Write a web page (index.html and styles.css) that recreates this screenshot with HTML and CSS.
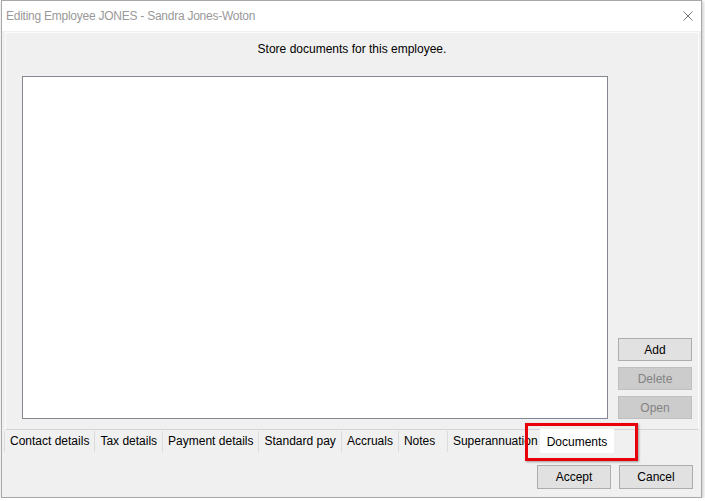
FILE: index.html
```html
<!DOCTYPE html>
<html lang="en">
<head>
    <meta charset="UTF-8">
    <title>Editing Employee JONES - Sandra Jones-Woton</title>
    <link rel="stylesheet" href="styles.css">
</head>
<body>
    <div class="window">
        <div class="titlebar">
            <span class="title">Editing Employee JONES - Sandra Jones-Woton</span>
            <svg class="close" width="10" height="10" viewBox="0 0 10 10">
                <path d="M0.5 0.5 L9.5 9.5 M9.5 0.5 L0.5 9.5" stroke="#7a7a7a" stroke-width="1" fill="none"/>
            </svg>
        </div>

        <div class="client">
            <div class="tab-page">
                <p class="caption">Store documents for this employee.</p>
                <div class="page-body">
                    <div class="listbox"></div>
                    <div class="side-buttons">
                        <button class="btn">Add</button>
                        <button class="btn" disabled>Delete</button>
                        <button class="btn" disabled>Open</button>
                    </div>
                </div>
            </div>

            <div class="tab-strip">
                <div class="tab">Contact details</div>
                <div class="tab">Tax details</div>
                <div class="tab">Payment details</div>
                <div class="tab">Standard pay</div>
                <div class="tab">Accruals</div>
                <div class="tab notes">Notes</div>
                <div class="tab">Superannuation</div>
                <div class="tab selected">Documents<span class="highlight"></span></div>
            </div>

            <div class="footer">
                <button class="btn">Accept</button>
                <button class="btn">Cancel</button>
            </div>
        </div>
    </div>
</body>
</html>
```

FILE: styles.css
```css
body {
    margin: 0;
    background: #ffffff;
    font-family: "Liberation Sans", Arial, sans-serif;
    font-size: 12px;
    color: #000;
}

.window {
    margin-left: 1px;
    width: 701px;
    height: 498px;
    box-sizing: border-box;
    border: 1px solid #a8a8a8;
    box-shadow: 1px 1px 4px rgba(0,0,0,0.25);
    background: #f0f0f0;
    display: flex;
    flex-direction: column;
}

.titlebar {
    height: 30px;
    flex: none;
    background: #fff;
    display: flex;
    align-items: center;
    padding: 0 8px 0 4px;
}

.title {
    color: #999;
    letter-spacing: -0.25px;
}

.close {
    margin-left: auto;
}

.client {
    flex: 1;
    display: flex;
    flex-direction: column;
    padding: 1px 2px 0 3px;
}

.tab-page {
    height: 398px;
    flex: none;
    box-sizing: border-box;
    border: 1px solid #fbfbfb;
    border-bottom-color: #d4d4d4;
    padding: 8px 0 10px 0;
    display: flex;
    flex-direction: column;
}

.caption {
    margin: 0;
    line-height: 16px;
    text-align: center;
}

.page-body {
    flex: 1;
    display: flex;
    margin-top: 19px;
    padding: 0 6px 0 16px;
}

.listbox {
    width: 586px;
    box-sizing: border-box;
    border: 1px solid #828790;
    background: #fff;
}

.side-buttons {
    margin-left: 10px;
    display: flex;
    flex-direction: column;
    justify-content: flex-end;
    gap: 6px;
}

.btn {
    width: 74px;
    height: 23px;
    padding: 0;
    font: inherit;
    color: #000;
    background: #e1e1e1;
    border: 1px solid #adadad;
}

.btn:disabled {
    background: #cccccc;
    border-color: #bfbfbf;
    color: #838383;
}

.tab-strip {
    display: flex;
    height: 22px;
    margin: 1px 0 0 -1px;
}

.tab {
    padding: 0 5px;
    line-height: 21px;
    height: 21px;
    border-right: 1px solid #dcdcdc;
    white-space: nowrap;
}

.tab:first-child {
    border-left: 1px solid #dcdcdc;
}

.tab.notes {
    min-width: 38px;
}

.tab.selected {
    position: relative;
    z-index: 1;
    background: #fff;
    margin: -2px 0 0 -4px;
    height: 24px;
    line-height: 26px;
    padding: 0 7px;
    border-right: none;
}

.highlight {
    position: absolute;
    left: -15px;
    top: -6px;
    width: 113px;
    height: 38px;
    box-sizing: border-box;
    border: 3px solid #e8000b;
    box-shadow: 1px 1px 2px rgba(0,0,0,0.35);
}

.footer {
    display: flex;
    justify-content: flex-end;
    gap: 8px;
    margin-top: 12px;
    padding-right: 6px;
}

.footer .btn {
    height: 24px;
}
```
